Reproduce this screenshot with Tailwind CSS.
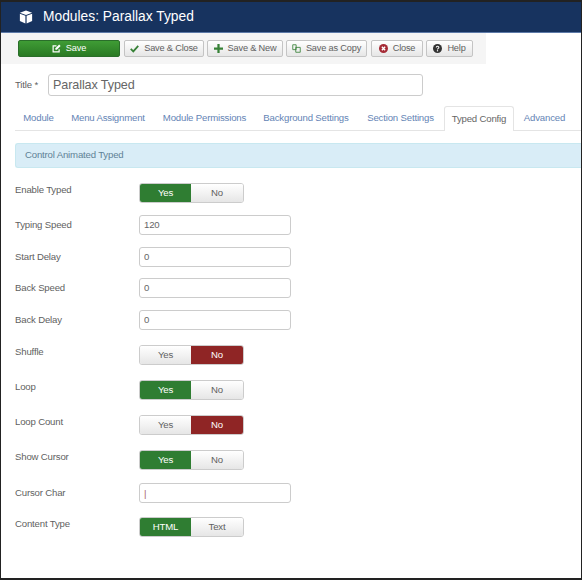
<!DOCTYPE html>
<html lang="en">
<head>
    <meta charset="UTF-8">
    <title>Modules: Parallax Typed</title>
    <script src="https://cdn.jsdelivr.net/npm/@tailwindcss/browser@4"></script>
</head>
<body class="bg-white font-['Liberation_Sans',Arial,sans-serif]">
<div class="w-[582px] h-[580px] overflow-hidden border-x border-t-2 border-b-2 border-x-[#222] border-t-[#222] border-b-[#222] text-[9.6px] tracking-[-0.17px] text-[#5f5f5f]">
    <!-- Header -->
    <header class="h-[31px] bg-[#17335f] border-b border-[#5d7aa8] flex items-center pl-[18px] gap-[10px]">
        <svg class="w-[14px] h-[14px] text-white" viewBox="0 0 16 16" fill="currentColor"><path d="M8 0.5 15 3 8 5.6 1 3z"/><path d="M1 4.3 7.3 6.7V15.5L1 12.6z"/><path d="M15 4.3 8.7 6.7V15.5L15 12.6z"/></svg>
        <h1 class="text-[13.8px] tracking-normal text-white leading-none">Modules: Parallax Typed</h1>
    </header>

    <!-- Toolbar -->
    <div class="w-[485px] h-[31px] bg-[#f5f5f5] flex items-center pl-[17px] gap-[3px] text-[9.2px]">
        <button class="w-[102px] h-[17px] mr-[1px] rounded-[2px] border border-[#2a6e2a] bg-gradient-to-b from-[#3f9c35] to-[#2a7a24] text-white flex items-center justify-center gap-[5px]">
            <svg class="w-[9px] h-[9px]" viewBox="0 0 12 12" fill="none" stroke="currentColor" stroke-width="1.6"><path d="M9.5 7v3.5h-8v-8H6"/><path d="M4.5 5.5v2h2l5-5-2-2z" fill="currentColor" stroke="none"/></svg>
            Save
        </button>
        <button class="w-[80px] h-[17px] rounded-[2px] border border-[#c4c4c4] bg-gradient-to-b from-white to-[#e6e6e6] flex items-center justify-center gap-[5px]">
            <svg class="w-[9px] h-[9px]" viewBox="0 0 12 12" fill="none" stroke="#378137" stroke-width="2.4"><path d="M1 6.5 4.4 9.8 11 2.6"/></svg>
            Save &amp; Close
        </button>
        <button class="w-[76px] h-[17px] rounded-[2px] border border-[#c4c4c4] bg-gradient-to-b from-white to-[#e6e6e6] flex items-center justify-center gap-[5px]">
            <svg class="w-[9px] h-[9px]" viewBox="0 0 12 12" fill="none" stroke="#378137" stroke-width="3"><path d="M6 0v12M0 6h12"/></svg>
            Save &amp; New
        </button>
        <button class="w-[81px] h-[17px] rounded-[2px] border border-[#c4c4c4] bg-gradient-to-b from-white to-[#e6e6e6] flex items-center justify-center gap-[5px]">
            <svg class="w-[9px] h-[9px]" viewBox="0 0 12 12" fill="none" stroke="#378137" stroke-width="1.1"><path d="M1 1h4.5v6.5H1z"/><path d="M5 4.5h6v6.5H5z"/></svg>
            Save as Copy
        </button>
        <button class="w-[52px] h-[17px] ml-[1px] rounded-[2px] border border-[#c4c4c4] bg-gradient-to-b from-white to-[#e6e6e6] flex items-center justify-center gap-[5px]">
            <svg class="w-[9px] h-[9px]" viewBox="0 0 12 12"><circle cx="6" cy="6" r="6" fill="#a52a35"/><path d="M3.8 3.8 8.2 8.2M8.2 3.8 3.8 8.2" stroke="#fff" stroke-width="1.8"/></svg>
            Close
        </button>
        <button class="w-[47px] h-[17px] rounded-[2px] border border-[#c4c4c4] bg-gradient-to-b from-white to-[#e6e6e6] flex items-center justify-center gap-[5px]">
            <svg class="w-[9px] h-[9px]" viewBox="0 0 12 12"><circle cx="6" cy="6" r="6" fill="#333"/><path d="M4.3 4.6C4.4 2.6 7.8 2.6 7.8 4.5 7.8 5.8 6 5.7 6 7.2" fill="none" stroke="#fff" stroke-width="1.4"/><path d="M5.2 8.2h1.6v1.6H5.2z" fill="#fff"/></svg>
            Help
        </button>
    </div>

    <main class="pl-[14px]">
        <!-- Title -->
        <div class="flex items-center mt-[10px] h-[22px]">
            <label class="w-[33px]">Title *</label>
            <input class="w-[375px] h-[22px] px-[4px] border border-[#ccc] rounded-[3px] text-[12.6px] tracking-[-0.1px] text-[#666]" value="Parallax Typed">
        </div>

        <!-- Tabs -->
        <nav class="mt-[10px] h-[25px] border-b border-[#e4e4e4] flex items-stretch whitespace-nowrap text-[#6484b5]">
            <a class="w-[47px] flex items-center justify-center">Module</a>
            <a class="w-[92px] flex items-center justify-center">Menu Assignment</a>
            <a class="w-[101px] flex items-center justify-center">Module Permissions</a>
            <a class="w-[102px] flex items-center justify-center">Background Settings</a>
            <a class="w-[87px] flex items-center justify-center">Section Settings</a>
            <a class="w-[70px] h-[25px] flex items-center justify-center bg-white border border-b-0 border-[#e4e4e4] rounded-t-[3px] text-[#666]">Typed Config</a>
            <a class="w-[61px] flex items-center justify-center">Advanced</a>
        </nav>

        <!-- Alert -->
        <div class="mt-[12px] h-[25px] bg-[#d9edf7] border border-r-0 border-[#c8e8f0] rounded-l-[3px] pl-[9px] flex items-center text-[#5f8296]">Control Animated Typed</div>

        <!-- Fields -->
        <div class="mt-[15px] flex flex-col">
            <div class="flex h-[20px]">
                <label class="w-[124px]">Enable Typed</label>
                <div class="flex w-[105px] h-[20px] rounded-[3px] overflow-hidden border border-[#ccc]">
                    <span class="w-[51px] flex items-center justify-center bg-[#2f7d32] text-white">Yes</span>
                    <span class="flex-1 flex items-center justify-center bg-gradient-to-b from-white to-[#e6e6e6]">No</span>
                </div>
            </div>
            <div class="flex items-center h-[20px] mt-[12px]">
                <label class="w-[124px]">Typing Speed</label>
                <input class="w-[152px] h-[20px] px-[4px] pb-[1px] border border-[#ccc] rounded-[3px] text-[9.6px] text-[#666]" value="120">
            </div>
            <div class="flex items-center h-[20px] mt-[12px]">
                <label class="w-[124px]">Start Delay</label>
                <input class="w-[152px] h-[20px] px-[4px] pb-[1px] border border-[#ccc] rounded-[3px] text-[9.6px] text-[#666]" value="0">
            </div>
            <div class="flex items-center h-[20px] mt-[11px]">
                <label class="w-[124px]">Back Speed</label>
                <input class="w-[152px] h-[20px] px-[4px] pb-[1px] border border-[#ccc] rounded-[3px] text-[9.6px] text-[#666]" value="0">
            </div>
            <div class="flex items-center h-[20px] mt-[12px]">
                <label class="w-[124px]">Back Delay</label>
                <input class="w-[152px] h-[20px] px-[4px] pb-[1px] border border-[#ccc] rounded-[3px] text-[9.6px] text-[#666]" value="0">
            </div>
            <div class="flex h-[20px] mt-[15px]">
                <label class="w-[124px]">Shuffle</label>
                <div class="flex w-[105px] h-[20px] rounded-[3px] overflow-hidden border border-[#ccc]">
                    <span class="w-[51px] flex items-center justify-center bg-gradient-to-b from-white to-[#e6e6e6]">Yes</span>
                    <span class="flex-1 flex items-center justify-center bg-[#8f2525] text-white">No</span>
                </div>
            </div>
            <div class="flex h-[20px] mt-[15px]">
                <label class="w-[124px]">Loop</label>
                <div class="flex w-[105px] h-[20px] rounded-[3px] overflow-hidden border border-[#ccc]">
                    <span class="w-[51px] flex items-center justify-center bg-[#2f7d32] text-white">Yes</span>
                    <span class="flex-1 flex items-center justify-center bg-gradient-to-b from-white to-[#e6e6e6]">No</span>
                </div>
            </div>
            <div class="flex h-[20px] mt-[15px]">
                <label class="w-[124px]">Loop Count</label>
                <div class="flex w-[105px] h-[20px] rounded-[3px] overflow-hidden border border-[#ccc]">
                    <span class="w-[51px] flex items-center justify-center bg-gradient-to-b from-white to-[#e6e6e6]">Yes</span>
                    <span class="flex-1 flex items-center justify-center bg-[#8f2525] text-white">No</span>
                </div>
            </div>
            <div class="flex h-[20px] mt-[15px]">
                <label class="w-[124px]">Show Cursor</label>
                <div class="flex w-[105px] h-[20px] rounded-[3px] overflow-hidden border border-[#ccc]">
                    <span class="w-[51px] flex items-center justify-center bg-[#2f7d32] text-white">Yes</span>
                    <span class="flex-1 flex items-center justify-center bg-gradient-to-b from-white to-[#e6e6e6]">No</span>
                </div>
            </div>
            <div class="flex items-center h-[20px] mt-[13px]">
                <label class="w-[124px]">Cursor Char</label>
                <input class="w-[152px] h-[20px] px-[4px] border border-[#ccc] rounded-[3px] text-[9.6px] text-[#a66]" value="|">
            </div>
            <div class="flex h-[20px] mt-[14px]">
                <label class="w-[124px]">Content Type</label>
                <div class="flex w-[105px] h-[20px] rounded-[3px] overflow-hidden border border-[#ccc]">
                    <span class="w-[51px] flex items-center justify-center bg-[#2f7d32] text-white">HTML</span>
                    <span class="flex-1 flex items-center justify-center bg-gradient-to-b from-white to-[#e6e6e6]">Text</span>
                </div>
            </div>
        </div>
    </main>
</div>
</body>
</html>
